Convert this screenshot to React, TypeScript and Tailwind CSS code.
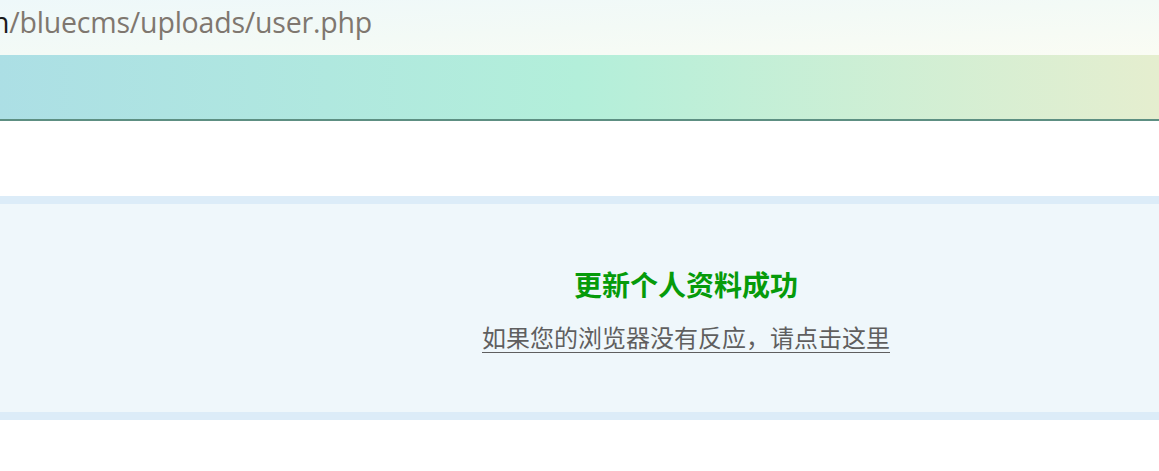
import React from 'react';

const App: React.FC = () => {
  return (
    <div className="w-[1159px] h-[471px] bg-white overflow-hidden font-['Noto_Sans','Noto_Sans_CJK_SC',sans-serif]">
      {/* Address strip */}
      <div className="h-[55px] bg-gradient-to-br from-[#eef8fa] via-[#f3faf6] to-[#fafcf4] flex items-start pt-[6px]">
        <span className="text-[28.5px] leading-[32px] -ml-[8px] text-[#7f776f] font-['Open_Sans',sans-serif] tracking-[-0.2px]">
          <span className="text-[#1a1a1a]">n</span>/bluecms/uploads/user.php
        </span>
      </div>

      {/* Header band */}
      <div className="h-[66px] bg-gradient-to-r from-[#acdfe5] via-[#b3efda] to-[#e5eecf] border-b-2 border-[#5d8f82]" />

      {/* Message panel */}
      <div className="mt-[75px] border-y-8 border-[#dcecf8] bg-[#eff7fb] h-[224px] flex flex-col items-center pt-[63px] pl-[213px]">
        <h2 className="text-[28px] leading-[36px] font-bold text-[#069b0a]">更新个人资料成功</h2>
        <a href="#" className="mt-[19px] text-[24px] leading-[32px] text-[#5f5f5f] underline decoration-1 underline-offset-[5px]">
          如果您的浏览器没有反应，请点击这里
        </a>
      </div>
    </div>
  );
};

export default App;
